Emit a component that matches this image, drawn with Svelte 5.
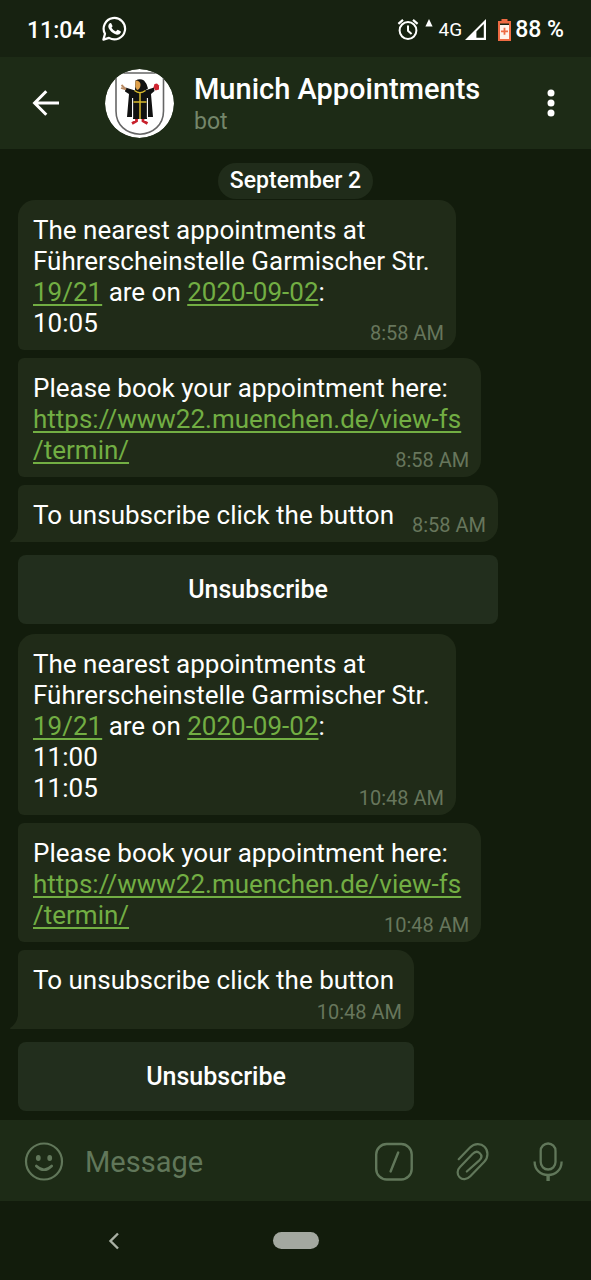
<script>
  const groups = [
    {
      slots: ['10:05'],
      time: '8:58 AM',
      meta: 'inline'
    },
    {
      slots: ['11:00', '11:05'],
      time: '10:48 AM',
      meta: 'below'
    }
  ]

  const bookingUrl = 'https://www22.muenchen.de/view-fs/termin/'

  let draft = ''
</script>

<div class="screen">
  <div class="status">
    <span class="clock">11:04</span>
    <svg class="whatsapp" width="26" height="26" viewBox="0 0 26 26">
      <path d="M2.4 23.6 L4 17.8 A10.7 10.7 0 1 1 8 21.9 Z" fill="none" stroke="currentColor" stroke-width="2.2" stroke-linejoin="round" />
      <path d="M8.7 7.2 q.7-.6 1.5 0 l1.3 2.7 q.1.6-1 1.8 q1.6 2.7 4.3 3.8 l1.5-1.6 q.4-.3.9 0 l2.4 1.3 q.5.3.2 1.2 q-1.1 2.5-3.9 2.3 q-4.1-.7-7.2-4.9 q-2.9-3.9 0-6.6z" fill="currentColor" />
    </svg>
    <div class="indicators">
      <svg width="22" height="24" viewBox="0 0 22 24">
        <circle cx="11" cy="12.5" r="8.4" fill="none" stroke="currentColor" stroke-width="2" />
        <path d="M11 7.5 v5.3 l3.6 3.3" fill="none" stroke="currentColor" stroke-width="2" />
        <path d="M1.4 5.9 L6 1.9 M20.6 5.9 L16 1.9" stroke="currentColor" stroke-width="2.2" />
      </svg>
      <svg class="up" width="8" height="24" viewBox="0 0 8 24">
        <path d="M4 1 L7.6 8.5 H.4z" fill="currentColor" />
      </svg>
      <span class="network">4G</span>
      <svg class="signal" width="21" height="21" viewBox="0 0 21 21">
        <path d="M0 21 L21 0 V21z M18.8 5 L11.4 12.4 V18.8 H18.8z" fill="currentColor" fill-rule="evenodd" />
      </svg>
      <svg class="battery" width="13" height="22" viewBox="0 0 13 22">
        <path d="M3.5 0 h6 v2 H13 V22 H0 V2 h3.5z" fill="#ee6b43" />
        <path d="M2 4.5 h9 V6 H2z" fill="#172211" />
        <path d="M2 6 h9 V20 H2z" fill="#fff3ea" />
        <path d="M6.5 8.8 v7 M3 12.3 h7" stroke="#ee6b43" stroke-width="1.8" />
      </svg>
      <span class="percent">88 %</span>
    </div>
  </div>

  <header>
    <button class="back" aria-label="Back">
      <svg width="28" height="28" viewBox="0 0 28 28">
        <path d="M14.3 2.2 L2.6 14 L14.3 25.8 M3 14 H27" fill="none" stroke="currentColor" stroke-width="3" />
      </svg>
    </button>
    <svg class="avatar" width="69" height="69" viewBox="0 0 69 69">
      <circle cx="34.5" cy="34.5" r="34.5" fill="#fff" />
      <path d="M11 4 H58.5 V42 C58.5 56 48 64.5 35 65.2 C21 64.5 11 56 11 42z" fill="#fff" stroke="#666" stroke-width="1.6" />
      <path d="M31.5 50 v2 l-4.5 2.5 M38 50 v2 l4.5 2.5" fill="none" stroke="#c8202c" stroke-width="2.8" />
      <path d="M30.5 11.5 Q35 9 39 11.5 Q42 14.5 43 19.5 L40 21.5 L49 18.5 L49.5 22 L46 25 L48 48 H43 L42 30 V50 H28 V30 L27 48 H22 L24 25 L20 22.5 L20.5 18.5 L30 21.5z" fill="#111" />
      <path d="M42.4 29 V49 M27.6 29 V49" stroke="#fff" stroke-width="1.1" />
      <path d="M30.5 11.5 Q35.5 11.5 35.5 16 Q35 20.5 32 21 L30.3 18z" fill="#dfa04a" />
      <path d="M29.5 21.5 Q35 26 40.5 21.5 M35 24 V50 M28.5 33 H41.5" fill="none" stroke="#d8b92d" stroke-width="1.5" />
      <path d="M16.5 16 l4.5 4.5 M16 19 l5 1.5" stroke="#b98a62" stroke-width="1.8" />
      <path d="M49.5 15 l2.5-.5 l2 2 v4 l-3.5 1 l-2-3z" fill="#ce2330" />
    </svg>
    <div class="peer">
      <h1>Munich Appointments</h1>
      <p>bot</p>
    </div>
    <button class="more" aria-label="More options">
      <svg width="8" height="28" viewBox="0 0 8 28" fill="currentColor">
        <circle cx="4" cy="4" r="3.5" />
        <circle cx="4" cy="14" r="3.5" />
        <circle cx="4" cy="24" r="3.5" />
      </svg>
    </button>
  </header>

  <main>
    <div class="date">September 2</div>

    {#each groups as group}
      <section>
        <div class="bubble first">
          <p>
            <span>The nearest appointments at</span>
            <span>{'Führerscheinstelle Garmischer Str. '}</span>
            <span><a href="#maps">19/21</a> are on <a href="#calendar">2020-09-02</a>:</span>
            {#each group.slots as slot}
              <span>{slot}</span>
            {/each}
          </p>
          <time class="corner">{group.time}</time>
        </div>
        <div class="bubble">
          <p>
            <span>Please book your appointment here:</span>
            <a class="url" href={bookingUrl}><span>https://www22.muenchen.de/view-fs</span><span>/termin/</span></a>
          </p>
          <time class="corner">{group.time}</time>
        </div>
        <div class="with-keyboard">
          <div class="bubble last {group.meta}">
            <p>To unsubscribe click the button</p>
            <time>{group.time}</time>
            <svg class="tail" width="9" height="20" viewBox="0 0 9 20">
              <path d="M8 0 H9 V20 H1 Q0 20 0 19 Q7 14.5 8 6z" fill="currentColor" />
            </svg>
          </div>
          <button class="action">Unsubscribe</button>
        </div>
      </section>
    {/each}
  </main>

  <form class="composer" on:submit|preventDefault>
    <button type="button" aria-label="Emoji">
      <svg width="40" height="40" viewBox="0 0 40 40" fill="none" stroke="currentColor" stroke-width="2.2">
        <circle cx="20" cy="20.5" r="18" />
        <path d="M12.3 25 Q20 32.5 27.7 25" stroke-width="2.6" stroke-linecap="round" />
        <ellipse cx="14.3" cy="17" rx="2.4" ry="3" fill="currentColor" stroke="none" />
        <ellipse cx="25.7" cy="17" rx="2.4" ry="3" fill="currentColor" stroke="none" />
      </svg>
    </button>
    <input type="text" placeholder="Message" aria-label="Message" bind:value={draft} />
    <div class="tools">
      <button type="button" aria-label="Bot commands">
        <svg width="40" height="40" viewBox="0 0 40 40" fill="none" stroke="currentColor" stroke-width="2.4" stroke-linecap="round">
          <rect x="2.2" y="3" width="35.5" height="35.5" rx="10.5" />
          <path d="M24.2 11.5 L16.6 30.5" />
        </svg>
      </button>
      <button type="button" aria-label="Attach">
        <svg width="40" height="40" viewBox="0 0 40 40" fill="none" stroke="currentColor" stroke-width="2.2" stroke-linecap="round">
          <path d="M7.7 18.2 L19 6.6 C23.5 2 30 2.3 33.5 5.8 C37.3 9.6 37.6 16.2 33.3 20.7 L19.3 35.2 C15.8 38.8 11.3 39 8.6 36.2 C5.8 33.4 6 29 9 26 L21.5 13 C23.8 10.6 26.7 10.2 28.8 12.2 C31 14.3 30.6 17 28.6 19.1 L15.8 30.5" />
        </svg>
      </button>
      <button type="button" aria-label="Record voice message">
        <svg width="40" height="40" viewBox="0 0 40 40" fill="none" stroke="currentColor" stroke-width="2.3">
          <rect x="12.7" y="2.5" width="14.8" height="26" rx="7.4" />
          <path d="M6.6 20.5 C6.6 29 12.7 34 20.1 34 C27.5 34 33.6 29 33.6 20.5" />
          <path d="M20.1 34 V40" stroke-width="3.4" />
        </svg>
      </button>
    </div>
  </form>

  <nav>
    <button class="nav-back" aria-label="System back">
      <svg width="12" height="18" viewBox="0 0 12 18">
        <path d="M10 1.5 L2.5 9 L10 16.5" fill="none" stroke="currentColor" stroke-width="2.4" />
      </svg>
    </button>
    <button class="home" aria-label="Home"></button>
  </nav>
</div>

<style>
  :global(body) {
    background: #121c0c;
  }
  .screen {
    display: flex;
    flex-direction: column;
    min-height: 100vh;
    background: #121c0c;
    color: #fff;
    font-family: Roboto, "Liberation Sans", sans-serif;
    font-size: 26px;
    line-height: 31px;
  }
  h1, p {
    margin: 0;
  }
  svg {
    display: block;
    flex: none;
  }
  button {
    padding: 0;
    border: 0;
    background: none;
    color: inherit;
    font: inherit;
    cursor: pointer;
  }

  .status {
    display: flex;
    align-items: center;
    height: 57px;
    padding: 0 27px;
    background: #172211;
    font-size: 23px;
    font-weight: 500;
  }
  .clock {
    padding-top: 3px;
  }
  .whatsapp {
    margin-left: 16px;
  }
  .indicators {
    display: flex;
    align-items: center;
    margin-left: auto;
    padding-top: 2px;
  }
  .up {
    margin: 0 6px;
  }
  .network {
    font-size: 19px;
    font-weight: 400;
  }
  .signal {
    margin: 0 12px 0 3px;
  }
  .battery {
    margin-right: 4px;
  }

  header {
    display: flex;
    align-items: center;
    height: 92px;
    padding: 0 36px 0 32px;
    background: #1d2b16;
  }
  .avatar {
    margin: 0 20px 0 45px;
    border-radius: 50%;
  }
  .peer {
    flex: 1;
    min-width: 0;
    padding-top: 4px;
  }
  h1 {
    font-size: 29px;
    font-weight: 500;
    line-height: 34px;
  }
  .peer p {
    color: #74866a;
    font-size: 23px;
    line-height: 32px;
  }

  main {
    display: flex;
    flex: 1;
    flex-direction: column;
    align-items: flex-start;
    padding: 14px 18px 9px;
  }
  .date {
    align-self: center;
    margin-bottom: 1px;
    padding: 0 12px;
    border-radius: 18px;
    background: #202c1a;
    font-size: 23px;
    font-weight: 500;
    line-height: 36px;
  }
  section {
    display: flex;
    flex-direction: column;
    align-items: flex-start;
    gap: 8px;
  }
  section + section {
    margin-top: 10px;
  }
  .bubble {
    position: relative;
    padding: 15px 20px 11px 15px;
    border-radius: 6px 17px 17px 6px;
    background: #202b18;
  }
  .bubble span {
    display: block;
    white-space: pre;
  }
  .bubble.first {
    border-top-left-radius: 17px;
  }
  .bubble.last {
    border-bottom-left-radius: 0;
  }
  .bubble a {
    color: #72ae43;
    text-decoration-thickness: 2px;
    text-underline-offset: 3px;
    text-decoration-skip-ink: none;
  }
  .url {
    display: block;
  }
  time {
    color: #67765c;
    font-size: 20px;
    line-height: 24px;
  }
  .corner {
    position: absolute;
    right: 12px;
    bottom: 5px;
  }
  .inline {
    display: flex;
    align-items: flex-end;
    gap: 18px;
    padding: 15px 12px 5px 15px;
  }
  .inline p {
    padding-bottom: 6px;
  }
  .below {
    display: flex;
    flex-direction: column;
    padding-bottom: 5px;
  }
  .below time {
    align-self: flex-end;
    margin: 4px -8px 0 0;
  }
  .tail {
    position: absolute;
    bottom: 0;
    left: -8px;
    color: #202b18;
  }
  .with-keyboard {
    display: flex;
    flex-direction: column;
    gap: 13px;
  }
  .action {
    height: 69px;
    border-radius: 8px;
    background: #222e1d;
    font-size: 25px;
    font-weight: 500;
  }

  .composer {
    display: flex;
    align-items: center;
    height: 81px;
    padding: 0 23px 0 24px;
    background: #1d2b16;
    color: #61775a;
  }
  .composer input {
    flex: 1;
    min-width: 0;
    padding: 3px 0 0;
    margin: 0 21px;
    border: 0;
    outline: 0;
    background: none;
    color: #fff;
    font: inherit;
    font-size: 29px;
  }
  .composer input::placeholder {
    color: #61775a;
    opacity: 1;
  }
  .tools {
    display: flex;
    gap: 37px;
  }

  nav {
    display: grid;
    grid-template-columns: 1fr 46px 1fr;
    align-items: center;
    height: 79px;
    color: #a9b0a4;
  }
  .nav-back {
    margin-right: 44px;
    justify-self: center;
  }
  .home {
    height: 17px;
    border-radius: 9px;
    background: #a3a8a0;
  }
</style>
